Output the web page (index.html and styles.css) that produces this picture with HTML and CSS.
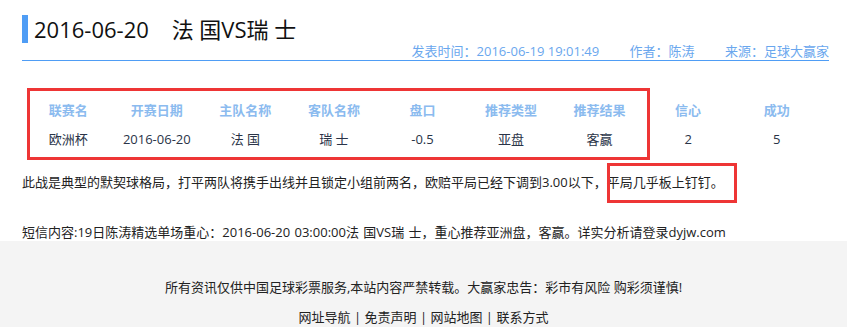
FILE: index.html
```html
<!DOCTYPE html>
<html lang="zh-CN">
<head>
<meta charset="utf-8">
<title>2016-06-20 法 国VS瑞 士</title>
<link rel="stylesheet" href="styles.css">
</head>
<body>
<div class="page">
  <div class="article">
    <h1 class="title">2016-06-20&nbsp;&nbsp;&nbsp; 法 国VS瑞 士</h1>
    <div class="meta">
      <span>发表时间：2016-06-19 19:01:49</span>
      <span class="gap">作者：陈涛</span>
      <span class="gap">来源：足球大赢家</span>
    </div>
    <table class="tips">
      <thead>
        <tr>
          <th>联赛名</th><th>开赛日期</th><th>主队名称</th><th>客队名称</th><th>盘口</th><th>推荐类型</th><th>推荐结果</th><th>信心</th><th>成功</th>
        </tr>
      </thead>
      <tbody>
        <tr>
          <td>欧洲杯</td><td>2016-06-20</td><td>法 国</td><td>瑞 士</td><td>-0.5</td><td>亚盘</td><td>客赢</td><td>2</td><td>5</td>
        </tr>
      </tbody>
    </table>
    <p class="analysis">此战是典型的默契球格局，打平两队将携手出线并且锁定小组前两名，欧赔平局已经下调到3.00以下，平局几乎板上钉钉。</p>
    <p class="sms">短信内容:19日陈涛精选单场重心：2016-06-20 03:00:00法 国VS瑞 士，重心推荐亚洲盘，客赢。详实分析请登录dyjw.com</p>
  </div>
  <div class="footer">
    <p class="notice">所有资讯仅供中国足球彩票服务,本站内容严禁转载。大赢家忠告：彩市有风险 购彩须谨慎!</p>
    <p class="links"><a href="#">网址导航</a> | <a href="#">免责声明</a> | <a href="#">网站地图</a> | <a href="#">联系方式</a></p>
  </div>
  <div class="mark mark-table"></div>
  <div class="mark mark-text"></div>
</div>
</body>
</html>
```
FILE: styles.css
```css
html, body {
  margin: 0;
  padding: 0;
  background: #ffffff;
}
body {
  font-family: "Open Sans", "Noto Sans CJK SC", sans-serif;
  font-size: 13px;
  color: #222;
}
.page {
  position: relative;
  height: 327px;
  overflow: hidden;
}
.article {
  padding: 15px 18px 0 22px;
}
.title {
  margin: 0;
  height: 28px;
  border-left: 6px solid #4f9df5;
  padding-left: 6px;
  font-size: 22px;
  font-weight: normal;
  line-height: 28px;
  color: #111;
  white-space: nowrap;
}
.meta {
  text-align: right;
  line-height: 17px;
  color: #6aa7ee;
  border-bottom: 1px solid #4f9df5;
  font-size: 13px;
}
.meta .gap {
  margin-left: 27px;
}
.tips {
  margin: 35px 0 0 2px;
  width: 797px;
  border-collapse: collapse;
  table-layout: fixed;
}
.tips th, .tips td {
  height: 29px;
  padding: 0;
  text-align: center;
  font-size: 13px;
  line-height: 29px;
}
.tips th {
  color: #8bbbef;
  font-weight: bold;
}
.tips td {
  color: #2a3448;
}
.analysis {
  margin: 18px 0 0;
  line-height: 20px;
  color: #222;
}
.sms {
  margin: 31px 0 0;
  line-height: 18px;
  color: #222;
  word-spacing: 1px;
}
.footer {
  background: #f4f4f4;
  padding: 36px 0 0;
  text-align: center;
  height: 50px;
}
.footer p {
  margin: 0;
  line-height: 20px;
  color: #222;
}
.footer .links {
  margin-top: 10px;
}
.footer a {
  color: #222;
  text-decoration: none;
}
.mark {
  position: absolute;
  border: 3px solid #ee3535;
  box-sizing: border-box;
}
.mark-table {
  left: 27px;
  top: 88px;
  width: 623px;
  height: 72px;
}
.mark-text {
  left: 607px;
  top: 163px;
  width: 130px;
  height: 40px;
}
```
